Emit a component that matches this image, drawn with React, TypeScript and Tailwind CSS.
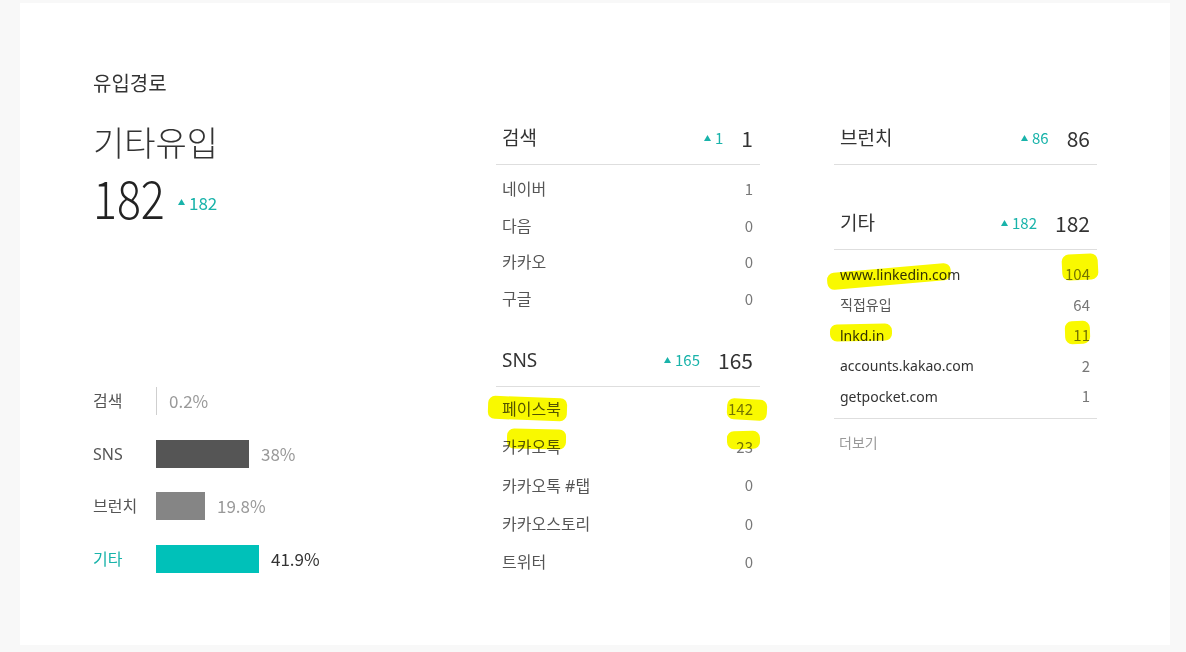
import React from "react";

const TEAL = "text-[#19b3aa]";

function Tri() {
  return (
    <svg width="7" height="6" viewBox="0 0 7 6" className="mr-[4px] mb-[1px]">
      <polygon points="3.5,0 7,6 0,6" fill="#19b3aa" />
    </svg>
  );
}

function Hl({ l, t, w, h, r = 0 }: { l: number; t: number; w: number; h: number; r?: number }) {
  return (
    <span
      className="absolute bg-[#f9f900] mix-blend-multiply rounded-[7px] pointer-events-none"
      style={{ left: l, top: t, width: w, height: h, transform: `rotate(${r}deg)` }}
    />
  );
}

type Row = { label: string; value: string; dark?: boolean; hl?: { l: number; t: number; w: number; h: number; r?: number }[] };

function Header({ title, delta, total }: { title: string; delta: string; total: string }) {
  return (
    <div className="h-[50px] pb-[2px] flex items-center border-b border-[#dedede] pl-[6px] pr-[7px]">
      <div className="text-[19px] text-[#333] flex-1">{title}</div>
      <div className={`flex items-center text-[15px] ${TEAL}`} style={{ fontFamily: '"Noto Sans CJK KR", sans-serif' }}>
        <Tri />
        {delta}
      </div>
      <div className="ml-[18px] text-[21px] text-[#333]" style={{ fontFamily: '"Noto Sans CJK KR", sans-serif' }}>
        {total}
      </div>
    </div>
  );
}

function DataRow({ r, h, size }: { r: Row; h: string; size: string }) {
  return (
    <div className={`relative flex items-center ${h} pl-[6px] pr-[7px]`}>
      <div className={`flex-1 ${size} ${r.dark ? "text-[#333]" : "text-[#555]"}`}>{r.label}</div>
      <div className="text-[15px] text-[#777]" style={{ fontFamily: '"Noto Sans CJK KR", sans-serif' }}>
        {r.value}
      </div>
      {r.hl?.map((x, i) => (
        <Hl key={i} {...x} />
      ))}
    </div>
  );
}

export default function App() {
  const search: Row[] = [
    { label: "네이버", value: "1" },
    { label: "다음", value: "0" },
    { label: "카카오", value: "0" },
    { label: "구글", value: "0" },
  ];
  const sns: Row[] = [
    { label: "페이스북", value: "142", hl: [{ l: -8, t: 7, w: 79, h: 23, r: 2 }, { l: 231, t: 9, w: 40, h: 21, r: 3 }] },
    { label: "카카오톡", value: "23", hl: [{ l: 11, t: 1, w: 59, h: 20, r: 1 }, { l: 231, t: 3, w: 33, h: 18, r: -1 }] },
    { label: "카카오톡 #탭", value: "0" },
    { label: "카카오스토리", value: "0" },
    { label: "트위터", value: "0" },
  ];
  const etc: Row[] = [
    { label: "www.linkedin.com", value: "104", dark: true, hl: [{ l: -7, t: 9, w: 124, h: 17, r: -5 }, { l: 228, t: -5, w: 36, h: 26, r: -3 }] },
    { label: "직접유입", value: "64" },
    { label: "lnkd.in", value: "11", dark: true, hl: [{ l: -4, t: 4, w: 62, h: 17, r: -1 }, { l: 231, t: 1, w: 25, h: 23, r: -2 }] },
    { label: "accounts.kakao.com", value: "2", dark: true },
    { label: "getpocket.com", value: "1", dark: true },
  ];

  const cjk = { fontFamily: '"Noto Sans CJK KR", sans-serif' };

  return (
    <div
      className="w-[1186px] h-[652px] bg-[#f8f8f8] pt-[3px] pl-[20px]"
      style={{ fontFamily: '"Noto Sans", "Noto Sans CJK KR", sans-serif' }}
    >
      <div className="w-[1150px] h-[642px] bg-white pl-[73px] pt-[67px] flex">
        {/* Column 1 */}
        <div className="w-[403px] flex flex-col">
          <div className="text-[20px] leading-[28px] text-[#333]">유입경로</div>
          <div className="mt-[25px] text-[34px] leading-[40px] text-[#333] font-light">기타유입</div>
          <div className="mt-[9px] h-[50px] flex items-end">
            <div
              className="text-[52px] leading-[50px] text-[#222] font-light origin-left scale-x-[0.86] w-[70px]"
              style={cjk}
            >
              182
            </div>
            <div className={`ml-[15px] mb-[7px] flex items-center text-[17px] ${TEAL}`} style={cjk}>
              <Tri />
              182
            </div>
          </div>
          <div className="mt-[165px] flex flex-col gap-[24.5px]">
            <div className="h-[28px] flex items-center">
              <div className="w-[63px] text-[16px] text-[#555]">검색</div>
              <div className="w-[1px] h-[28px] bg-[#cfcfcf]" />
              <div className="ml-[12px] text-[17px] text-[#999]" style={cjk}>0.2%</div>
            </div>
            <div className="h-[28px] flex items-center">
              <div className="w-[63px] text-[16px] text-[#555]">SNS</div>
              <div className="w-[93px] h-[28px] bg-[#555555]" />
              <div className="ml-[12px] text-[17px] text-[#999]" style={cjk}>38%</div>
            </div>
            <div className="h-[28px] flex items-center">
              <div className="w-[63px] text-[16px] text-[#555]">브런치</div>
              <div className="w-[49px] h-[28px] bg-[#858585]" />
              <div className="ml-[12px] text-[17px] text-[#999]" style={cjk}>19.8%</div>
            </div>
            <div className="h-[28px] flex items-center">
              <div className={`w-[63px] text-[16px] ${TEAL}`}>기타</div>
              <div className="w-[103px] h-[28px] bg-[#00c1b9]" />
              <div className="ml-[12px] text-[17px] text-[#333]" style={cjk}>41.9%</div>
            </div>
          </div>
        </div>

        {/* Column 2 */}
        <div className="w-[264px] mt-[45px] flex flex-col">
          <Header title="검색" delta="1" total="1" />
          <div className="mt-[6px]">
            {search.map((r) => (
              <DataRow key={r.label} r={r} h="h-[36.5px]" size="text-[16px]" />
            ))}
          </div>
          <div className="mt-[20px]">
            <Header title="SNS" delta="165" total="165" />
          </div>
          <div className="mt-[3px]">
            {sns.map((r) => (
              <DataRow key={r.label} r={r} h="h-[38.25px]" size="text-[16px]" />
            ))}
          </div>
        </div>

        {/* Column 3 */}
        <div className="w-[263px] ml-[74px] mt-[45px] flex flex-col">
          <Header title="브런치" delta="86" total="86" />
          <div className="mt-[35px]">
            <Header title="기타" delta="182" total="182" />
          </div>
          <div className="mt-[9px]">
            {etc.map((r) => (
              <DataRow key={r.label} r={r} h="h-[30.5px]" size="text-[14px]" />
            ))}
          </div>
          <div className="mt-[6px] border-t border-[#dedede]" />
          <div className="mt-[14px] pl-[5px] text-[14px] leading-[20px] text-[#999]">더보기</div>
        </div>
      </div>
    </div>
  );
}
